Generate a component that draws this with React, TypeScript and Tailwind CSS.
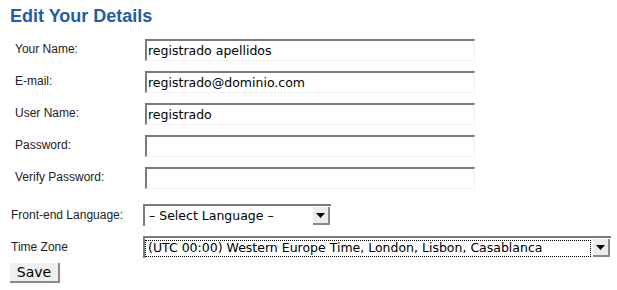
import React from "react";

const fields = [
  { label: "Your Name:", value: "registrado apellidos" },
  { label: "E-mail:", value: "registrado@dominio.com" },
  { label: "User Name:", value: "registrado" },
  { label: "Password:", value: "" },
  { label: "Verify Password:", value: "" },
];

function Arrow() {
  return (
    <div className="flex h-[18px] w-[17px] items-center justify-center border-r-2 border-b-2 border-[#8a8a8a] bg-[#ececec]">
      <svg width="9" height="5" viewBox="0 0 9 5">
        <path d="M0 0h9L4.5 5z" fill="#000" />
      </svg>
    </div>
  );
}

export default function App() {
  return (
    <div className="h-[290px] w-[617px] bg-white font-['Liberation_Sans',Arial,sans-serif]">
      <h2 className="pl-[10px] pt-[5px] text-[18px] font-bold leading-[22px] text-[#1f5cab]">
        Edit Your Details
      </h2>

      <div className="mt-[12px] flex flex-col gap-[10px]">
        {fields.map((f) => (
          <div key={f.label} className="flex items-center">
            <label className="-mt-[2px] w-[145px] pl-[15px] text-[12px] text-[#222]">{f.label}</label>
            <input
              readOnly
              value={f.value}
              type={f.label.includes("Password") ? "password" : "text"}
              className="h-[22px] w-[330px] border-t-2 border-l-2 border-r border-b border-t-[#7a7a7a] border-l-[#7a7a7a] border-r-[#eeeeee] border-b-[#f2f2f2] bg-white px-[1px] font-['DejaVu_Sans',sans-serif] text-[12.5px] text-black outline-none"
            />
          </div>
        ))}
      </div>

      <div className="mt-[15px] flex items-center">
        <label className="w-[143px] pl-[11px] text-[12px] text-[#222]">Front-end Language:</label>
        <div className="flex h-[22px] w-[188px] items-center justify-between border-t-2 border-l-2 border-[#7a7a7a] bg-white pl-[4px] pr-[1px] font-['DejaVu_Sans',sans-serif] text-[12.5px] text-black">
          <span>– Select Language –</span>
          <Arrow />
        </div>
      </div>

      <div className="mt-[10px] flex items-center">
        <label className="w-[143px] pl-[11px] text-[12px] text-[#222]">Time Zone</label>
        <div className="flex h-[22px] w-[468px] items-center justify-between border-t-2 border-l-2 border-[#7a7a7a] bg-white pr-[1px] font-['DejaVu_Sans',sans-serif] text-[12.5px] text-black">
          <span className="mr-[2px] flex h-[17px] flex-1 items-center border border-dotted border-black pl-[2px]">
            (UTC 00:00) Western Europe Time, London, Lisbon, Casablanca
          </span>
          <Arrow />
        </div>
      </div>

      <div className="flex pl-[10px] pt-[5px]">
        <button className="h-[20px] w-[50px] border-r-2 border-b-2 border-[#8a8a8a] bg-[#efefef] font-['DejaVu_Sans',sans-serif] text-[14px] leading-none text-black">
          Save
        </button>
      </div>
    </div>
  );
}
